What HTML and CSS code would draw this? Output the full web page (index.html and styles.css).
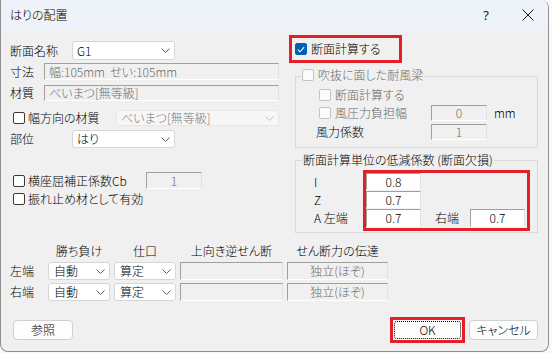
FILE: index.html
```html
<!DOCTYPE html>
<html lang="ja">
<head>
    <meta charset="UTF-8">
    <meta name="viewport" content="width=device-width, initial-scale=1.0">
    <title>はりの配置</title>
    <link rel="stylesheet" href="styles.css">
</head>
<body>
    <div class="window">
        <div class="titlebar">
            <span class="title">はりの配置</span>
            <span class="help">?</span>
            <span class="close"><svg width="12" height="12" viewBox="0 0 12 12"><path d="M0.5 0.5L11.5 11.5M11.5 0.5L0.5 11.5" stroke="#1a1a1a" stroke-width="1"/></svg></span>
        </div>

        <div class="content">
            <div class="upper">
                <!-- left column -->
                <div class="left">
                    <div class="row r1">
                        <span class="lbl lbl-name">断面名称</span>
                        <div class="combo combo-sm"><span>G1</span><svg class="chev" width="9" height="5" viewBox="0 0 9 5"><path d="M0.5 0.5L4.5 4.5L8.5 0.5" fill="none" stroke="#606060"/></svg></div>
                    </div>
                    <div class="row r2">
                        <span class="lbl lbl-short">寸法</span>
                        <div class="field ro grow">幅:105mm&nbsp;&nbsp;せい:105mm</div>
                    </div>
                    <div class="row r3">
                        <span class="lbl lbl-short">材質</span>
                        <div class="field ro grow">べいまつ[無等級]</div>
                    </div>
                    <div class="row r4">
                        <span class="cb"></span>
                        <span class="cb-lbl">幅方向の材質</span>
                        <div class="combo combo-dis"><span>べいまつ[無等級]</span><svg class="chev" width="9" height="5" viewBox="0 0 9 5"><path d="M0.5 0.5L4.5 4.5L8.5 0.5" fill="none" stroke="#c0c0c0"/></svg></div>
                    </div>
                    <div class="row r5">
                        <span class="lbl lbl-name">部位</span>
                        <div class="combo combo-sm"><span>はり</span><svg class="chev" width="9" height="5" viewBox="0 0 9 5"><path d="M0.5 0.5L4.5 4.5L8.5 0.5" fill="none" stroke="#606060"/></svg></div>
                    </div>
                    <div class="row r6">
                        <span class="cb"></span>
                        <span class="cb-lbl lbl-cb">横座屈補正係数Cb</span>
                        <div class="field num cb-field">1</div>
                    </div>
                    <div class="row r7">
                        <span class="cb"></span>
                        <span class="cb-lbl">振れ止め材として有効</span>
                    </div>
                </div>

                <!-- right column -->
                <div class="right">
                    <div class="redbox calc">
                        <span class="cb on"><svg width="8" height="7" viewBox="0 0 8 7"><path d="M0.8 3.6L3 5.8L7.2 1.2" fill="none" stroke="#fff" stroke-width="1.1"/></svg></span>
                        <span class="cb-lbl">断面計算する</span>
                    </div>

                    <div class="group g1">
                        <div class="gtitle"><span class="cb dis"></span><span class="cb-lbl dim">吹抜に面した耐風梁</span></div>
                        <div class="grow-row ga">
                            <span class="cb dis"></span><span class="cb-lbl dim">断面計算する</span>
                        </div>
                        <div class="grow-row gb">
                            <span class="cb dis"></span><span class="cb-lbl dim wind-lbl">風圧力負担幅</span>
                            <div class="field num small">0</div>
                            <span class="unit">mm</span>
                        </div>
                        <div class="grow-row gc">
                            <span class="lbl coef-lbl">風力係数</span>
                            <div class="field num small">1</div>
                        </div>
                    </div>

                    <div class="group g2">
                        <div class="gtitle plain">断面計算単位の低減係数 (断面欠損)</div>
                        <div class="reduce">
                            <div class="rlabels">
                                <span>I</span>
                                <span>Z</span>
                                <span>A 左端</span>
                            </div>
                            <div class="redbox rgrid">
                                <div class="field edit">0.8</div><div></div><div></div>
                                <div class="field edit">0.7</div><div></div><div></div>
                                <div class="field edit">0.7</div><span class="right-lbl">右端</span><div class="field edit">0.7</div>
                            </div>
                        </div>
                    </div>
                </div>
            </div>

            <!-- joint settings -->
            <div class="joints">
                <span></span>
                <span class="hd">勝ち負け</span>
                <span class="hd">仕口</span>
                <span class="hd">上向き逆せん断</span>
                <span class="hd">せん断力の伝達</span>

                <span class="lbl">左端</span>
                <div class="combo"><span>自動</span><svg class="chev" width="9" height="5" viewBox="0 0 9 5"><path d="M0.5 0.5L4.5 4.5L8.5 0.5" fill="none" stroke="#606060"/></svg></div>
                <div class="combo"><span>算定</span><svg class="chev" width="9" height="5" viewBox="0 0 9 5"><path d="M0.5 0.5L4.5 4.5L8.5 0.5" fill="none" stroke="#606060"/></svg></div>
                <div class="field ro"></div>
                <div class="field ro num">独立(ほぞ)</div>

                <span class="lbl">右端</span>
                <div class="combo"><span>自動</span><svg class="chev" width="9" height="5" viewBox="0 0 9 5"><path d="M0.5 0.5L4.5 4.5L8.5 0.5" fill="none" stroke="#606060"/></svg></div>
                <div class="combo"><span>算定</span><svg class="chev" width="9" height="5" viewBox="0 0 9 5"><path d="M0.5 0.5L4.5 4.5L8.5 0.5" fill="none" stroke="#606060"/></svg></div>
                <div class="field ro"></div>
                <div class="field ro num">独立(ほぞ)</div>
            </div>

            <div class="footer">
                <button class="btn ref">参照</button>
                <div class="redbox okbox"><button class="btn ok">OK</button></div>
                <button class="btn cancel">キャンセル</button>
            </div>
        </div>
    </div>
</body>
</html>
```

FILE: styles.css
```css
html {
    background: #f9f9f9;
}

body {
    margin: 0;
    font-family: "Noto Sans CJK JP", "Noto Sans", sans-serif;
    font-size: 12px;
    font-weight: 300;
    line-height: 14px;
    color: #000;
    font-feature-settings: "palt";
}

.window {
    width: 549px;
    height: 352px;
    box-sizing: border-box;
    background: #f0f0f0;
    border: 1px solid #8f8f8f;
    border-top: none;
    border-radius: 0 8px 8px 8px;
    overflow: hidden;
}

.titlebar {
    height: 30px;
    background: #eef2f9;
    display: flex;
    align-items: center;
    padding-left: 9px;
}

.help {
    margin-left: auto;
    margin-right: 33px;
    font-family: "Noto Sans", sans-serif;
    font-size: 13px;
    font-weight: 400;
    color: #1a1a1a;
}

.close {
    display: flex;
    margin-right: 14px;
}

.content {
    padding: 5px 10px 0 9px;
}

.upper {
    display: flex;
}

/* left column */
.left {
    width: 272px;
    padding-top: 6px;
}

.row {
    display: flex;
    align-items: center;
}

.r1 { height: 19px; }
.r2 { height: 17px; margin-top: 3px; }
.r3 { height: 16px; margin-top: 5px; }
.r4 { height: 16px; margin-top: 9px; }
.r5 { height: 18px; margin-top: 4px; }
.r6 { height: 17px; margin-top: 24px; }
.r7 { height: 14px; margin-top: 3px; }

.lbl-name { width: 62px; }
.lbl-short { width: 34px; }
.lbl-cb { width: 118px; }

.grow {
    flex: 1;
    align-self: stretch;
}

.left .cb {
    margin-left: 3px;
}

.cb-lbl {
    margin-left: 3px;
    white-space: nowrap;
}

.cb {
    width: 12px;
    height: 12px;
    box-sizing: border-box;
    border: 1px solid #3a3a3a;
    border-radius: 2px;
    background: #fff;
    flex-shrink: 0;
    display: flex;
    align-items: center;
    justify-content: center;
}

.cb.on {
    background: #005fb8;
    border-color: #005fb8;
}

.cb.dis {
    border-color: #c4c4c4;
    background: #fbfbfb;
}

.dim {
    color: #6a6a6a;
}

/* combo boxes */
.combo {
    box-sizing: border-box;
    display: flex;
    align-items: center;
    justify-content: space-between;
    background: #fff;
    border: 1px solid #d6d6d6;
    border-radius: 3px;
    padding: 0 4px 0 4px;
    white-space: nowrap;
}

.combo-sm {
    width: 103px;
    align-self: stretch;
}

.combo-dis {
    width: 163px;
    align-self: stretch;
    margin-left: auto;
    background: #f7f7f7;
    border-color: #e6e6e6;
    color: #7a7a7a;
}

/* edit fields */
.field {
    box-sizing: border-box;
    display: flex;
    align-items: center;
    background: #f0f0f0;
    border: 1px solid;
    border-color: #a0a0a0 #e2e2e2 #fff #a0a0a0;
    color: #6d6d6d;
    padding: 0 4px;
    white-space: nowrap;
}

.field.num {
    justify-content: center;
}

.field.edit {
    background: #fff;
    color: #000;
    justify-content: center;
}

.cb-field {
    width: 56px;
    align-self: stretch;
}

/* right column */
.right {
    width: 249px;
    margin-left: 10px;
}

.redbox {
    border: 3px solid #e3202a;
    box-sizing: border-box;
}

.calc {
    width: 113px;
    height: 28px;
    display: flex;
    align-items: center;
    padding-left: 3px;
}

.right .cb-lbl {
    margin-left: 4px;
}

.group {
    margin-left: 6px;
    width: 243px;
    box-sizing: border-box;
    border: 1px solid #d9d9d9;
}

.gtitle {
    display: flex;
    align-items: center;
    height: 14px;
    width: fit-content;
    background: #f0f0f0;
    white-space: nowrap;
}

.g1 {
    margin-top: 13px;
    height: 72px;
}

.g1 .gtitle {
    margin: -9px 0 0 5px;
    padding: 0 2px 0 1px;
}

.grow-row {
    display: flex;
    align-items: center;
}

.ga {
    height: 14px;
    margin: 6px 0 0 23px;
}

.gb {
    height: 16px;
    margin: 3px 0 0 23px;
}

.gc {
    height: 16px;
    margin: 3px 0 0 20px;
}

.wind-lbl { width: 96px; }
.coef-lbl { width: 115px; }

.field.small {
    width: 56px;
    height: 16px;
}

.unit {
    margin-left: 7px;
}

.g2 {
    margin-top: 12px;
    height: 73px;
}

.g2 .gtitle {
    margin: -8px 0 0 6px;
    padding: 0 1px;
}

.reduce {
    display: flex;
    margin: 3px 0 0 18px;
}

.rlabels {
    width: 49px;
    padding-top: 3px;
    display: grid;
    grid-template-rows: 17px 17px 18px;
    row-gap: 1px;
    align-items: center;
}

.rgrid {
    display: grid;
    grid-template-columns: 55px 49px 55px;
    grid-template-rows: 17px 17px 18px;
    row-gap: 1px;
    padding: 0 2px 1px 0;
}

.right-lbl {
    padding-left: 14px;
    align-self: center;
}

/* joints table */
.joints {
    display: grid;
    grid-template-columns: 34px 62px 62px 103px 101px;
    grid-template-rows: 17px 18px 18px;
    column-gap: 4px;
    row-gap: 3px;
    margin-top: 9px;
    align-items: center;
}

.joints .combo,
.joints .field {
    height: 100%;
}

.joints .combo {
    padding-left: 5px;
}

.hd {
    text-align: center;
    white-space: nowrap;
}

/* buttons */
.footer {
    display: flex;
    align-items: center;
    height: 26px;
    margin-top: 16px;
}

.btn {
    height: 20px;
    width: 69px;
    padding: 0;
    border: 1px solid #d0d0d0;
    border-radius: 4px;
    background: #fdfdfd;
    font: inherit;
    color: #000;
}

.ref {
    width: 60px;
    margin-left: 3px;
}

.okbox {
    margin-left: auto;
    width: 75px;
    height: 26px;
}

.ok {
    display: block;
    border-color: #fdfdfd;
    outline: 1px dotted #000;
    outline-offset: -2px;
}

.cancel {
    margin-left: 4px;
}
```
